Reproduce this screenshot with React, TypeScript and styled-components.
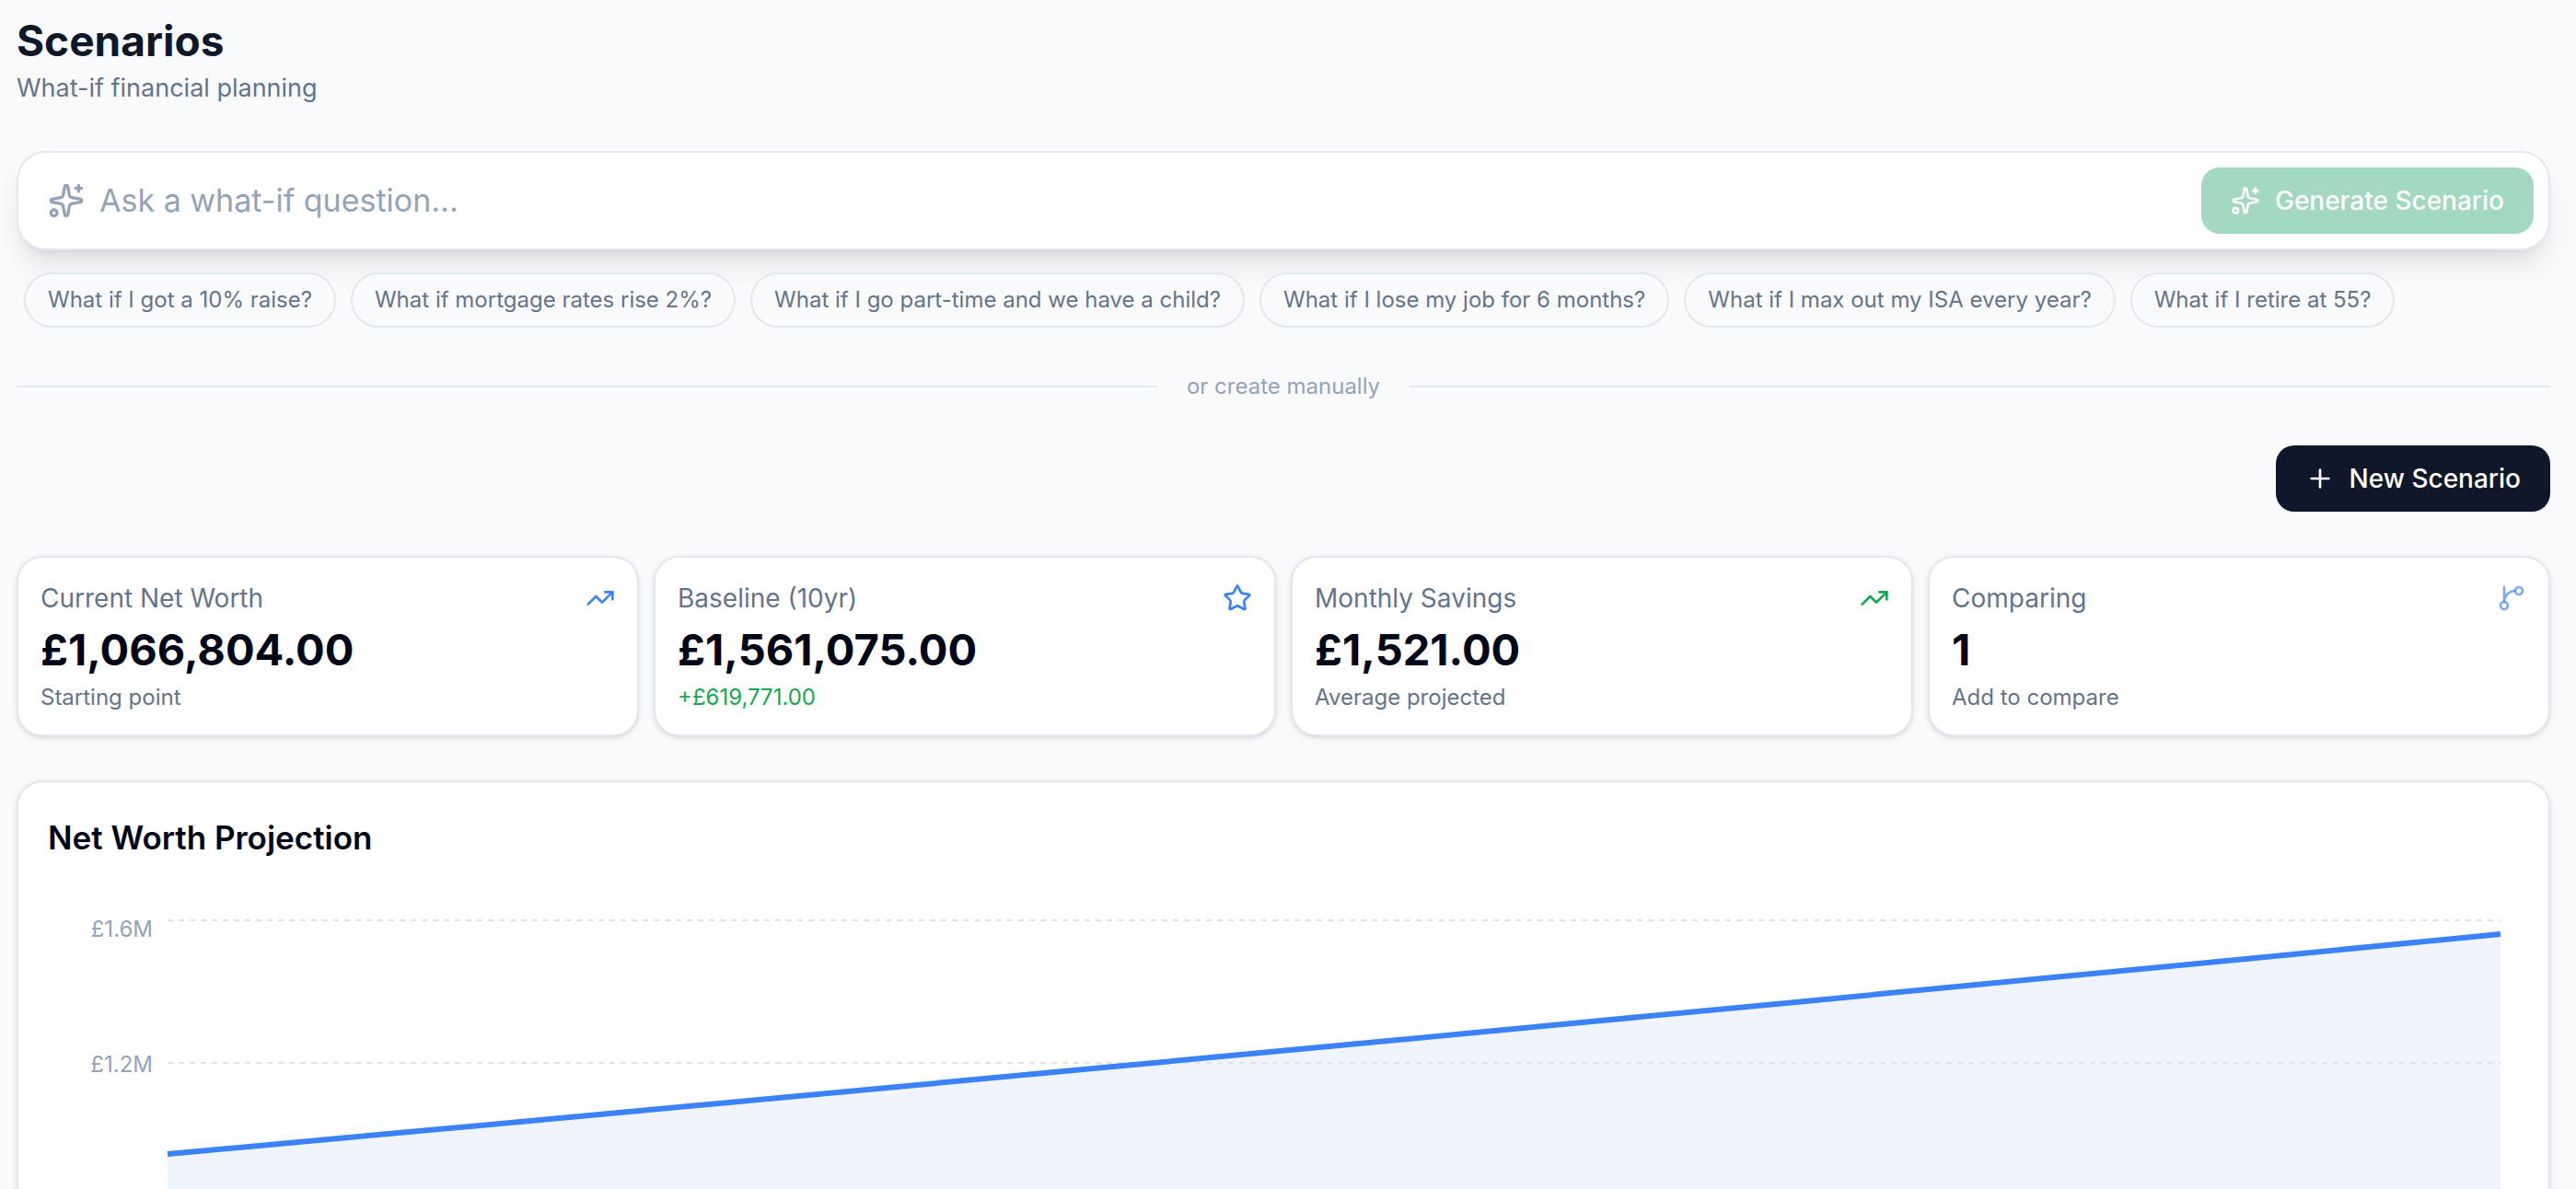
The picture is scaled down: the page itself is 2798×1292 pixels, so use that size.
import React, { useLayoutEffect, useRef, useState } from "react";
import styled, { createGlobalStyle } from "styled-components";
import { Plus, Sparkles, Star, TrendingUp } from "lucide-react";

const color = {
  page: "#f9fafc",
  card: "#ffffff",
  border: "#e2e8f0",
  ink: "#020617",
  navy: "#0f172a",
  muted: "#64748b",
  faint: "#94a3b8",
  blue: "#3b82f6",
  blueSoft: "rgba(59, 124, 250, 0.65)",
  green: "#14a850",
  mint: "#a3d8c1",
  area: "#f0f4ff",
  grid: "#e0e2e8",
};

const GlobalStyle = createGlobalStyle`
  *, *::before, *::after { box-sizing: border-box; }
  body {
    margin: 0;
    background: ${color.page};
    color: ${color.ink};
    font-family: Inter, "Liberation Sans", sans-serif;
    font-size: 28px;
    line-height: 40px;
  }
  h1, h2, p, dl, dd, dt, ul { margin: 0; padding: 0; }
  button, input { font: inherit; }
`;

const Page = styled.main`
  height: 100vh;
  overflow-y: auto;
  scrollbar-width: none;
  padding: 12px 28px 48px 18px;
  display: flex;
  flex-direction: column;
  gap: 48px;
  > * { flex-shrink: 0; }
`;

const Title = styled.h1`
  color: ${color.navy};
  font-size: 46px;
  line-height: 64px;
  font-weight: 700;
`;

const Subtitle = styled.p`
  color: ${color.muted};
  font-size: 27px;
`;

const Ask = styled.section`
  display: flex;
  flex-direction: column;
  gap: 24px;
`;

const AskBar = styled.form`
  display: flex;
  align-items: center;
  gap: 16px;
  padding: 16px 16px 16px 32px;
  border: 2px solid ${color.border};
  border-radius: 32px;
  background: ${color.card};
  color: ${color.faint};
  box-shadow: 0 20px 30px -6px rgba(0, 0, 0, 0.1), 0 8px 12px -8px rgba(0, 0, 0, 0.1);
`;

const AskInput = styled.input`
  flex: 1;
  min-width: 0;
  padding: 0;
  border: 0;
  outline: 0;
  background: transparent;
  color: ${color.ink};
  font-size: 34px;
  line-height: 56px;
  &::placeholder { color: ${color.faint}; opacity: 1; }
`;

const Button = styled.button<{ $bg: string }>`
  display: inline-flex;
  align-items: center;
  gap: 16px;
  height: 72px;
  padding: 0 32px;
  border: 0;
  border-radius: 20px;
  background: ${(p) => p.$bg};
  color: #ffffff;
  font-weight: 500;
  white-space: nowrap;
`;

const Chips = styled.ul`
  display: flex;
  flex-wrap: wrap;
  gap: 16px;
  padding: 0 8px;
  list-style: none;
`;

const Chip = styled.button`
  display: block;
  padding: 12px 24px;
  border: 2px solid ${color.border};
  border-radius: 30px;
  background: ${color.page};
  color: ${color.muted};
  font-size: 24px;
  line-height: 32px;
  white-space: nowrap;
`;

const Divider = styled.div`
  display: flex;
  align-items: center;
  gap: 32px;
  color: ${color.faint};
  font-size: 24px;
  line-height: 32px;
  &::before, &::after {
    content: "";
    flex: 1;
    height: 2px;
    background: ${color.border};
  }
`;

const Actions = styled.div`
  display: flex;
  justify-content: flex-end;
`;

const Stats = styled.dl`
  display: grid;
  grid-template-columns: repeat(4, 1fr);
  gap: 16px;
`;

const Card = styled.div`
  border: 2px solid ${color.border};
  border-radius: 28px;
  background: ${color.card};
  box-shadow: 0 2px 6px rgba(0, 0, 0, 0.1), 0 2px 4px -2px rgba(0, 0, 0, 0.1);
`;

const StatCard = styled(Card)`
  display: flex;
  flex-direction: column;
  gap: 4px;
  padding: 24px;
`;

const StatLabel = styled.dt`
  display: flex;
  align-items: center;
  justify-content: space-between;
  color: ${color.muted};
`;

const StatValue = styled.dd`
  font-size: 47px;
  line-height: 64px;
  font-weight: 700;
`;

const StatNote = styled.dd<{ $tone: string }>`
  color: ${(p) => p.$tone};
  font-size: 24px;
  line-height: 32px;
`;

const ChartCard = styled(Card)`
  padding: 32px;
`;

const ChartTitle = styled.h2`
  font-size: 35px;
  line-height: 56px;
  font-weight: 600;
`;

const ChartFrame = styled.div`
  margin-top: 32px;
  svg { display: block; width: 100%; }
`;

const AxisLabel = styled.text`
  fill: ${color.faint};
  font-size: 24px;
`;

type IconProps = { size?: number; color?: string };

function Branch({ size = 24, color: stroke = "currentColor" }: IconProps) {
  return (
    <svg
      width={size}
      height={size}
      viewBox="0 0 24 24"
      fill="none"
      stroke={stroke}
      strokeWidth={2}
      strokeLinecap="round"
      strokeLinejoin="round"
      aria-hidden
    >
      <path d="M15 6a9 9 0 0 0-9 9V3" />
      <circle cx="18" cy="6" r="3" />
      <circle cx="6" cy="18" r="3" />
    </svg>
  );
}

const prompts = [
  "What if I got a 10% raise?",
  "What if mortgage rates rise 2%?",
  "What if I go part-time and we have a child?",
  "What if I lose my job for 6 months?",
  "What if I max out my ISA every year?",
  "What if I retire at 55?",
];

type Stat = {
  label: string;
  value: string;
  note: string;
  tone: string;
  icon: React.ComponentType<IconProps>;
  iconColor: string;
};

const stats: Stat[] = [
  { label: "Current Net Worth", value: "£1,066,804.00", note: "Starting point", tone: color.muted, icon: TrendingUp, iconColor: color.blue },
  { label: "Baseline (10yr)", value: "£1,561,075.00", note: "+£619,771.00", tone: color.green, icon: Star, iconColor: color.blue },
  { label: "Monthly Savings", value: "£1,521.00", note: "Average projected", tone: color.muted, icon: TrendingUp, iconColor: color.green },
  { label: "Comparing", value: "1", note: "Add to compare", tone: color.muted, icon: Branch, iconColor: color.blueSoft },
];

// Projected net worth at the end of each year, in millions.
const netWorth = [0.9445, 1.0043, 1.0645, 1.1252, 1.1862, 1.2477, 1.3096, 1.3719, 1.4346, 1.4977, 1.5611];

const ticks = [
  { value: 1.6, label: "£1.6M" },
  { value: 1.2, label: "£1.2M" },
  { value: 0.8, label: "£0.8M" },
  { value: 0.4, label: "£0.4M" },
  { value: 0, label: "£0" },
];

const plot = { top: 30, left: 130, right: 20, height: 620, total: 700 };

function ProjectionChart() {
  const frame = useRef<HTMLDivElement>(null);
  const [width, setWidth] = useState(0);

  useLayoutEffect(() => {
    const node = frame.current;
    if (!node) return;
    const measure = () => setWidth(node.clientWidth);
    measure();
    const observer = new ResizeObserver(measure);
    observer.observe(node);
    return () => observer.disconnect();
  }, []);

  const right = Math.max(width - plot.right, plot.left);
  const bottom = plot.top + plot.height;
  const y = (v: number) => bottom - (v / 1.6) * plot.height;
  const x = (i: number) => plot.left + (i / (netWorth.length - 1)) * (right - plot.left);
  const points = netWorth.map((v, i) => `${x(i)},${y(v)}`).join(" ");

  return (
    <ChartFrame ref={frame}>
      <svg height={plot.total} role="img" aria-label="Net worth projection over ten years">
        <polygon points={`${plot.left},${bottom} ${points} ${right},${bottom}`} fill={color.area} />
        {ticks.map((t) => (
          <g key={t.label}>
            <line x1={plot.left} x2={right} y1={y(t.value)} y2={y(t.value)} stroke={color.grid} strokeWidth={2} strokeDasharray="6 6" />
            <AxisLabel x={plot.left - 16} y={Math.max(y(t.value) + 10, plot.top + 18)} textAnchor="end">
              {t.label}
            </AxisLabel>
          </g>
        ))}
        <polyline points={points} fill="none" stroke={color.blue} strokeWidth={6} />
      </svg>
    </ChartFrame>
  );
}

export default function App() {
  return (
    <>
      <GlobalStyle />
      <Page>
        <header>
          <Title>Scenarios</Title>
          <Subtitle>What-if financial planning</Subtitle>
        </header>

        <Ask>
          <AskBar onSubmit={(e) => e.preventDefault()}>
            <Sparkles size={40} aria-hidden />
            <AskInput type="text" aria-label="Ask a what-if question" placeholder="Ask a what-if question..." />
            <Button type="submit" $bg={color.mint} disabled>
              <Sparkles size={32} aria-hidden />
              Generate Scenario
            </Button>
          </AskBar>
          <Chips>
            {prompts.map((text) => (
              <li key={text}>
                <Chip type="button">{text}</Chip>
              </li>
            ))}
          </Chips>
        </Ask>

        <Divider>or create manually</Divider>

        <Actions>
          <Button type="button" $bg={color.navy}>
            <Plus size={32} aria-hidden />
            New Scenario
          </Button>
        </Actions>

        <Stats>
          {stats.map(({ label, value, note, tone, icon: Icon, iconColor }) => (
            <StatCard key={label}>
              <StatLabel>
                {label}
                <Icon size={32} color={iconColor} />
              </StatLabel>
              <StatValue>{value}</StatValue>
              <StatNote $tone={tone}>{note}</StatNote>
            </StatCard>
          ))}
        </Stats>

        <ChartCard as="section">
          <ChartTitle>Net Worth Projection</ChartTitle>
          <ProjectionChart />
        </ChartCard>
      </Page>
    </>
  );
}
